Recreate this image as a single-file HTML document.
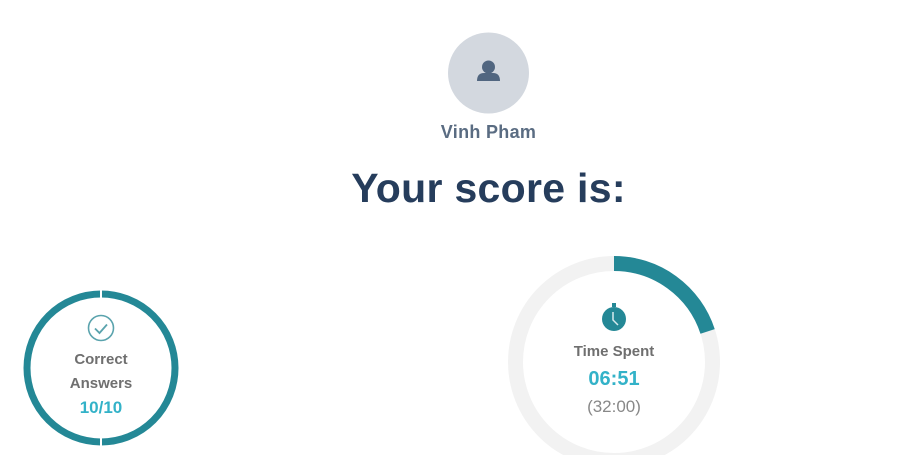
<!DOCTYPE html>
<html><head><meta charset="utf-8"><style>
html,body{margin:0;padding:0;background:#fff;width:900px;height:455px;overflow:hidden;font-family:"Liberation Sans",sans-serif;}
.abs{position:absolute;white-space:nowrap;}
</style></head><body>
<svg class="abs" style="left:0;top:0" width="900" height="455">
  <circle cx="488.5" cy="73" r="40.5" fill="#d3d8df"/>
  <circle cx="488.5" cy="67" r="6.5" fill="#516680"/>
  <path d="M477 81 Q477 73 484 73 L493 73 Q500 73 500 81 Z" fill="#516680"/>
  <circle cx="101" cy="368" r="74" fill="none" stroke="#248896" stroke-width="7"/>
  <rect x="100" y="290" width="2" height="10" fill="#fff"/>
  <rect x="100" y="436" width="2" height="10" fill="#fff"/>
  <circle cx="101" cy="328" r="12.5" fill="none" stroke="#5aa3ad" stroke-width="1.6"/>
  <path d="M95 328.5 L99.5 333 L107 324.5" fill="none" stroke="#5aa3ad" stroke-width="1.8"/>
  <circle cx="614" cy="362" r="98.5" fill="none" stroke="#f2f2f2" stroke-width="15"/>
  <path d="M614 263.5 A98.5 98.5 0 0 1 707.6 331.4" fill="none" stroke="#248896" stroke-width="15"/>
  <circle cx="614" cy="319" r="12" fill="#248896"/>
  <rect x="612" y="303" width="4" height="4" fill="#248896"/>
  <path d="M613 312 L613 320 L618 325" fill="none" stroke="#d7eaed" stroke-width="1.5"/>
</svg>
<div class="abs" style="left:0;width:977px;top:122px;text-align:center;font-size:18px;font-weight:bold;color:#5a6c82;letter-spacing:0.3px">Vinh Pham</div>
<div class="abs" style="left:0;width:977px;top:165px;text-align:center;font-size:41px;font-weight:bold;color:#263d5c;letter-spacing:0.3px">Your score is:</div>
<div class="abs" style="left:0;width:202px;top:351px;text-align:center;font-size:15px;font-weight:bold;color:#6f6f6f">Correct</div>
<div class="abs" style="left:0;width:202px;top:375px;text-align:center;font-size:15px;font-weight:bold;color:#6f6f6f">Answers</div>
<div class="abs" style="left:0;width:202px;top:398px;text-align:center;font-size:17px;font-weight:bold;color:#33b2c8">10/10</div>
<div class="abs" style="left:514px;width:200px;top:343px;text-align:center;font-size:15px;font-weight:bold;color:#6f6f6f">Time Spent</div>
<div class="abs" style="left:514px;width:200px;top:368px;text-align:center;font-size:20px;font-weight:bold;color:#33b2c8">06:51</div>
<div class="abs" style="left:514px;width:200px;top:397px;text-align:center;font-size:17px;color:#888">(32:00)</div>
</body></html>
